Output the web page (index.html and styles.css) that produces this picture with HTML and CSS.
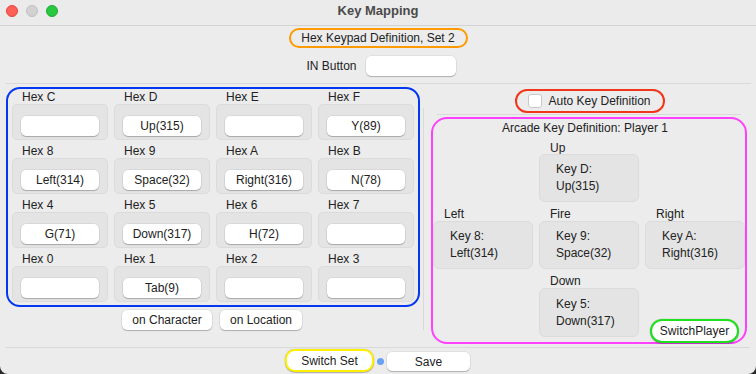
FILE: index.html
```html
<!DOCTYPE html>
<html lang="en">
<head>
    <meta charset="UTF-8">
    <title>Key Mapping</title>
    <link rel="stylesheet" href="styles.css">
</head>
<body>
    <div class="window">
        <div class="titlebar">
            <div class="lights">
                <span class="light red"></span>
                <span class="light gray"></span>
                <span class="light green"></span>
            </div>
            <div class="title">Key Mapping</div>
            <div></div>
        </div>

        <div class="head">
            <div class="set-label">Hex Keypad Definition, Set 2</div>
            <div class="in-row">
                <span>IN Button</span>
                <div class="field wide"></div>
            </div>
        </div>
        <div class="sep top-sep"></div>

        <div class="main">
            <div class="left">
                <div class="hex-box" id="hex-grid"></div>
                <div class="sort-row">
                    <button class="btn">on Character</button>
                    <button class="btn">on Location</button>
                </div>
            </div>
            <div class="vsep"></div>
            <div class="right">
                <label class="auto-def">
                    <span class="check"></span>
                    <span>Auto Key Definition</span>
                </label>
                <div class="sep right-sep"></div>
                <div class="arcade">
                    <div class="arcade-title">Arcade Key Definition: Player 1</div>

                    <div class="alabel c2 r2 first">Up</div>
                    <div class="akey c2 r3"><span>Key D:</span><span>Up(315)</span></div>

                    <div class="alabel c1 r4">Left</div>
                    <div class="alabel c2 r4">Fire</div>
                    <div class="alabel c3 r4">Right</div>
                    <div class="akey c1 r5"><span>Key 8:</span><span>Left(314)</span></div>
                    <div class="akey c2 r5"><span>Key 9:</span><span>Space(32)</span></div>
                    <div class="akey c3 r5"><span>Key A:</span><span>Right(316)</span></div>

                    <div class="alabel c2 r6">Down</div>
                    <div class="akey c2 r7 tall"><span>Key 5:</span><span>Down(317)</span></div>
                    <button class="btn switch-player c3 r7">SwitchPlayer</button>
                </div>
            </div>
        </div>

        <div class="sep bottom-sep"></div>
        <div class="footer">
            <button class="btn switch-set">Switch Set</button>
            <span class="dot"></span>
            <button class="btn save">Save</button>
        </div>
    </div>

    <script>
        // 키패드 배치 (위에서 아래로)
        const hexKeys = [
            ['C', ''], ['D', 'Up(315)'], ['E', ''], ['F', 'Y(89)'],
            ['8', 'Left(314)'], ['9', 'Space(32)'], ['A', 'Right(316)'], ['B', 'N(78)'],
            ['4', 'G(71)'], ['5', 'Down(317)'], ['6', 'H(72)'], ['7', ''],
            ['0', ''], ['1', 'Tab(9)'], ['2', ''], ['3', '']
        ];

        function renderHexGrid() {
            const grid = document.getElementById('hex-grid');
            hexKeys.forEach(([name, value]) => {
                const cell = document.createElement('div');
                cell.classList.add('hex-cell');

                const label = document.createElement('div');
                label.classList.add('hex-label');
                label.textContent = 'Hex ' + name;

                const box = document.createElement('div');
                box.classList.add('hex-key');

                const field = document.createElement('div');
                field.classList.add('field');
                field.textContent = value;

                box.appendChild(field);
                cell.appendChild(label);
                cell.appendChild(box);
                grid.appendChild(cell);
            });
        }

        renderHexGrid();
    </script>
</body>
</html>
```

FILE: styles.css
```css
* {
    box-sizing: border-box;
}
body {
    margin: 0;
    background-color: #2a2a2a;
    font-family: 'Liberation Sans', Arial, sans-serif;
    font-size: 12px;
    color: #222;
}
.window {
    width: 756px;
    height: 374px;
    overflow: hidden;
    background-color: #ececec;
    border-radius: 0 0 8px 8px;
}
.titlebar {
    height: 26px;
    display: grid;
    grid-template-columns: 1fr auto 1fr;
    align-items: center;
    background-color: #ebebeb;
    border-bottom: 1px solid #d2d2d2;
}
.lights {
    display: flex;
    gap: 8px;
    padding-left: 6px;
    margin-top: -3px;
}
.light {
    width: 12px;
    height: 12px;
    border-radius: 50%;
}
.light.red {
    background-color: #ff5f57;
    border: 0.5px solid #e2463f;
}
.light.gray {
    background-color: #d1d1d1;
    border: 0.5px solid #c0c0c0;
}
.light.green {
    background-color: #28c840;
    border: 0.5px solid #1eaa32;
}
.title {
    font-weight: bold;
    font-size: 13px;
    color: #4a4a4a;
    margin-top: -4px;
}
.head {
    display: flex;
    flex-direction: column;
    align-items: center;
    padding-top: 2px;
}
.set-label {
    width: 179px;
    height: 20px;
    line-height: 16px;
    text-align: center;
    border: 2px solid #ff9a00;
    border-radius: 10px;
}
.in-row {
    display: flex;
    align-items: center;
    gap: 9px;
    margin-top: 8px;
    padding-left: 6px;
}
.field {
    width: 78px;
    height: 20px;
    line-height: 20px;
    text-align: center;
    background-color: #fff;
    border-radius: 5px;
    box-shadow: 0 0 0 0.5px rgba(0,0,0,0.1), 0 1px 1px rgba(0,0,0,0.22);
}
.field.wide {
    width: 90px;
}
.sep {
    height: 1px;
    background-color: #d9d9d9;
}
.top-sep {
    margin: 7px 5px 0 6px;
}
.bottom-sep {
    margin: 0 6px 0 6px;
}
.main {
    display: flex;
    height: 263px;
}
.left {
    width: 420px;
    padding-left: 6px;
    padding-top: 3px;
}
.hex-box {
    width: 414px;
    height: 220px;
    border: 2px solid #0437f2;
    border-radius: 14px;
    padding: 1px 0 0 4px;
    display: grid;
    grid-template-columns: repeat(4, 96px);
    column-gap: 6px;
    row-gap: 4px;
    align-content: start;
}
.hex-label {
    height: 14px;
    line-height: 14px;
    padding-left: 10px;
}
.hex-key {
    height: 36px;
    display: flex;
    justify-content: center;
    align-items: flex-end;
    padding-bottom: 3px;
    background-color: #e4e4e4;
    border: 1px solid #dbdbdb;
    border-radius: 5px;
}
.sort-row {
    display: flex;
    justify-content: center;
    gap: 8px;
    margin-top: 3px;
    padding-right: 2px;
}
.btn {
    height: 20px;
    padding: 0;
    white-space: nowrap;
    font-family: inherit;
    font-size: 12px;
    color: #222;
    background-color: #fff;
    border: none;
    border-radius: 5px;
    box-shadow: 0 0 0 0.5px rgba(0,0,0,0.1), 0 1px 1px rgba(0,0,0,0.22);
}
.sort-row .btn:first-child {
    width: 90px;
}
.sort-row .btn:last-child {
    width: 82px;
}
.vsep {
    width: 1px;
    height: 222px;
    margin: 24px 0 0 3px;
    background-color: #d9d9d9;
}
.right {
    flex-grow: 1;
    display: flex;
    flex-direction: column;
    align-items: flex-start;
}
.auto-def {
    align-self: center;
    display: flex;
    align-items: center;
    height: 24px;
    margin-top: 5px;
    padding: 0 12px 0 11px;
    border: 2px solid #f2361a;
    border-radius: 12px;
}
.check {
    width: 14px;
    height: 14px;
    margin-right: 6px;
    background-color: #fff;
    border: 1px solid #c9c9c9;
    border-radius: 3px;
}
.right-sep {
    align-self: stretch;
    margin: 1px 15px 0 13px;
}
.arcade {
    width: 316px;
    height: 227px;
    margin: 2px 0 0 7px;
    border: 2px solid #ff40ff;
    border-radius: 16px;
    display: grid;
    grid-template-columns: repeat(3, 100px);
    column-gap: 6px;
    align-content: start;
}
.arcade-title {
    grid-column: 1 / -1;
    grid-row: 1;
    height: 14px;
    line-height: 14px;
    margin-top: 2px;
    padding-right: 8px;
    text-align: center;
}
.alabel {
    height: 14px;
    line-height: 14px;
    margin-top: 5px;
    padding-left: 11px;
}
.alabel.first {
    height: 13px;
    margin-top: 6px;
}
.akey {
    height: 48px;
    display: flex;
    flex-direction: column;
    justify-content: center;
    padding-left: 16px;
    line-height: 17px;
    background-color: #e4e4e4;
    border: 1px solid #dbdbdb;
    border-radius: 6px;
}
.akey.tall {
    height: 49px;
}
.c1 { grid-column: 1; }
.c2 { grid-column: 2; }
.c3 { grid-column: 3; }
.r2 { grid-row: 2; }
.r3 { grid-row: 3; }
.r4 { grid-row: 4; }
.r5 { grid-row: 5; }
.r6 { grid-row: 6; }
.r7 { grid-row: 7; }
.switch-player {
    align-self: end;
    justify-self: end;
    width: 89px;
    height: 24px;
    margin: 0 6px -6px 0;
    border: 2px solid #1ee01e;
    border-radius: 12px;
}
.footer {
    display: flex;
    justify-content: center;
    align-items: center;
    gap: 3px;
    padding-top: 1px;
    padding-right: 1px;
}
.switch-set {
    width: 89px;
    height: 23px;
    border: 2px solid #ffef00;
    border-radius: 10px;
}
.dot {
    width: 7px;
    height: 7px;
    border-radius: 50%;
    background-color: #6aa2f2;
    margin-top: 2px;
}
.save {
    width: 83px;
    height: 19px;
    margin-top: 2px;
}
```
